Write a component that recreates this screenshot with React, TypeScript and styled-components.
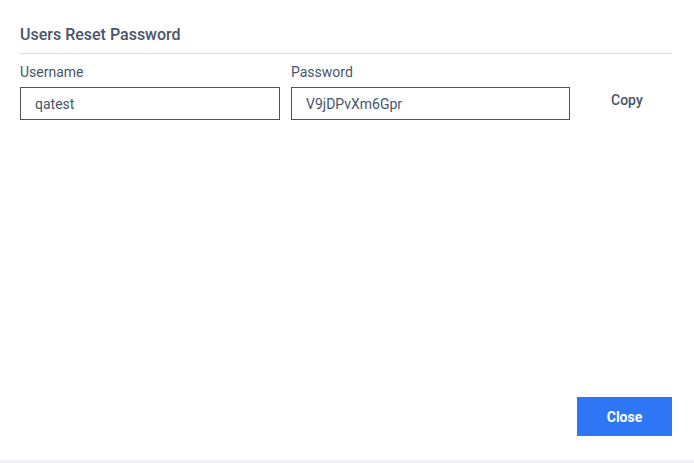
import React from "react";
import styled, { createGlobalStyle } from "styled-components";

const Global = createGlobalStyle`
  html, body { margin: 0; padding: 0; background: #fff; }
  body { font-family: Roboto, "Noto Sans", sans-serif; }
  * { box-sizing: border-box; }
`;

const Page = styled.div`
  height: 463px;
  display: flex;
  flex-direction: column;
`;

const Dialog = styled.div`
  flex: 1;
  display: flex;
  flex-direction: column;
  padding: 26px 22px 24px 20px;
`;

const Title = styled.h2`
  margin: 0;
  font-size: 16px;
  font-weight: 500;
  color: #4a5468;
  line-height: 18px;
  padding-bottom: 9px;
  border-bottom: 1px solid #d9dde6;
`;

const Row = styled.div`
  display: flex;
  align-items: flex-end;
  gap: 11px;
  margin-top: 10px;
`;

const Field = styled.label<{ $w: number }>`
  display: flex;
  flex-direction: column;
  width: ${(p) => p.$w}px;
`;

const Label = styled.span`
  font-size: 14px;
  color: #4a5468;
  line-height: 16px;
  margin-bottom: 7px;
`;

const Input = styled.input`
  height: 33px;
  border: 1px solid #4a5468;
  border-radius: 0;
  padding: 0 14px;
  font-family: inherit;
  font-size: 14px;
  color: #4a5468;
  outline: none;
  background: #fff;
`;

const CopyButton = styled.button`
  border: none;
  background: none;
  font-family: inherit;
  font-size: 14px;
  font-weight: 500;
  color: #4a5468;
  height: 33px;
  padding: 0;
  margin-left: 30px;
  margin-bottom: 4px;
  cursor: pointer;
`;

const Footer = styled.div`
  margin-top: auto;
  display: flex;
  justify-content: flex-end;
`;

const CloseButton = styled.button`
  width: 95px;
  height: 39px;
  border: none;
  background: #2f76f6;
  color: #fff;
  font-family: inherit;
  font-size: 14px;
  font-weight: 700;
  cursor: pointer;
`;

const BottomBar = styled.div`
  height: 3px;
  background: #f0f1f5;
`;

export default function App() {
  return (
    <>
      <Global />
      <Page>
        <Dialog>
          <Title>Users Reset Password</Title>
          <Row>
            <Field $w={260}>
              <Label>Username</Label>
              <Input defaultValue="qatest" readOnly />
            </Field>
            <Field $w={279}>
              <Label>Password</Label>
              <Input defaultValue="V9jDPvXm6Gpr" readOnly />
            </Field>
            <CopyButton>Copy</CopyButton>
          </Row>
          <Footer>
            <CloseButton>Close</CloseButton>
          </Footer>
        </Dialog>
        <BottomBar />
      </Page>
    </>
  );
}
